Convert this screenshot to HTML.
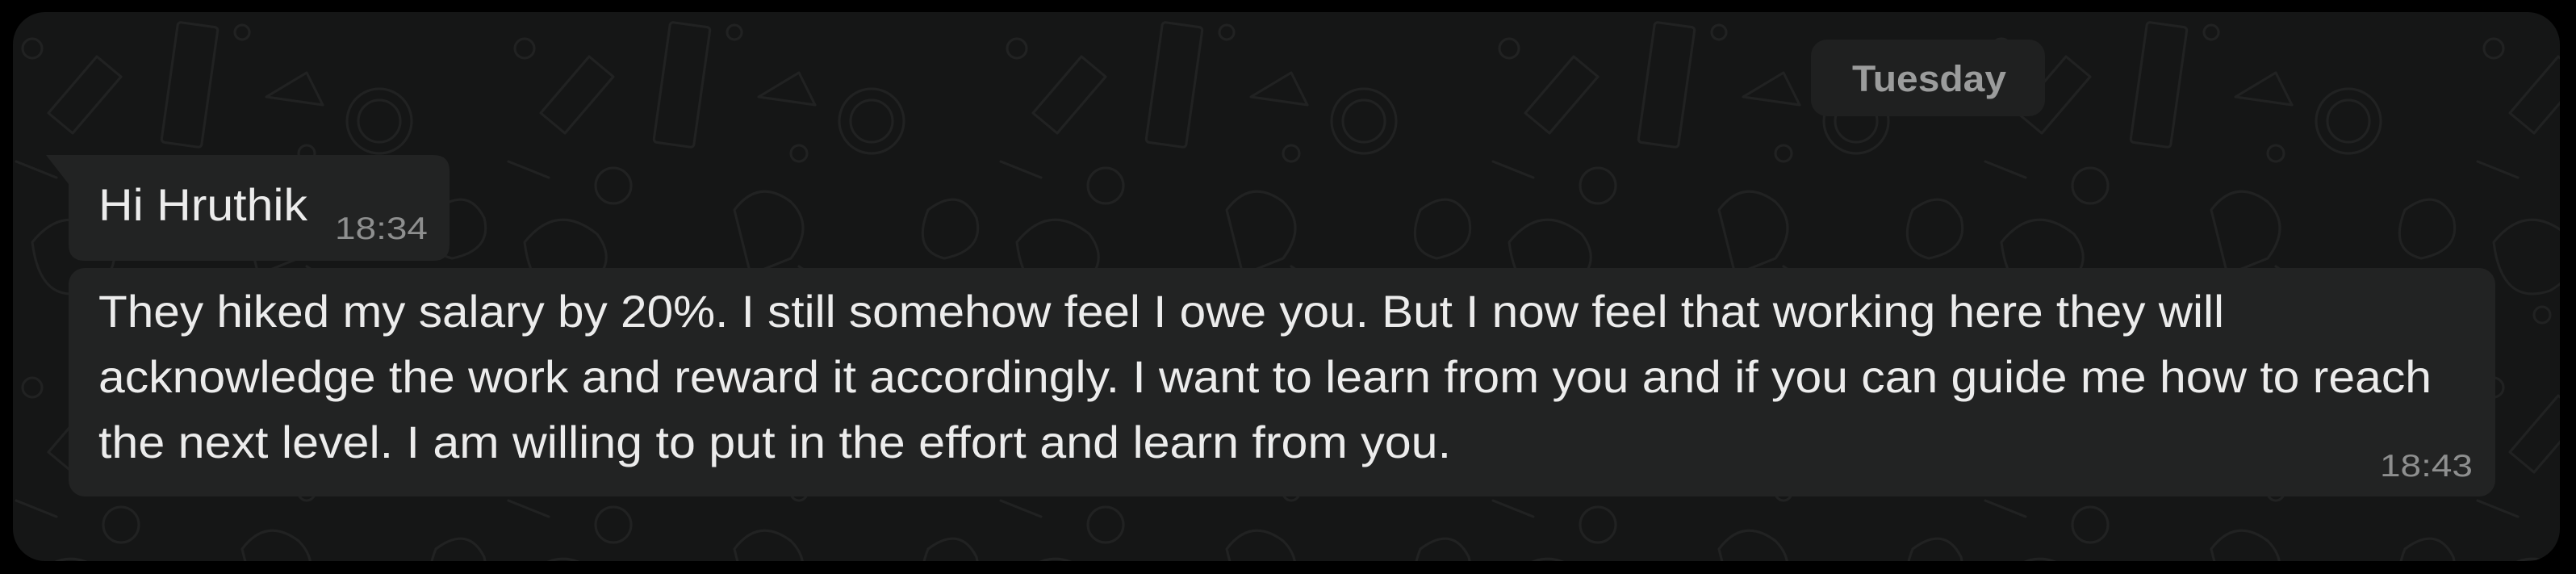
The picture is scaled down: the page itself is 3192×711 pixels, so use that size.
<!DOCTYPE html>
<html><head><meta charset="utf-8"><style>
html,body{margin:0;padding:0;background:#000;width:3192px;height:711px;overflow:hidden}
svg{display:block}
text{font-family:"Liberation Sans",Arial,sans-serif}
</style></head><body>
<svg width="3192" height="711" viewBox="0 0 3192 711" xmlns="http://www.w3.org/2000/svg">
<defs>
<clipPath id="pc"><rect x="16" y="15" width="3156" height="680" rx="40"/></clipPath>
<pattern id="doodle" width="610" height="420" patternUnits="userSpaceOnUse">
<g fill="none" stroke="#212222" stroke-width="3" stroke-linecap="round" stroke-linejoin="round">
<circle cx="40" cy="60" r="12"/><circle cx="150" cy="230" r="22"/><circle cx="300" cy="40" r="9"/>
<circle cx="470" cy="150" r="40"/><circle cx="470" cy="150" r="26"/>
<rect x="210" y="30" width="50" height="150" rx="4" transform="rotate(8 235 105)"/>
<path d="M60 140 l60 -70 l30 25 l-60 70 z M40 300 q40 -50 90 -10 q30 40 -20 70 q-60 20 -70 -60z"/>
<path d="M300 260 q30 -40 70 -10 q30 30 0 70 l-50 20 z M380 330 l30 20 M20 200 l50 20"/>
<path d="M540 260 q40 -30 60 10 q10 40 -40 50 q-40 -10 -20 -60z M330 120 l50 -30 l20 40 z"/>
<circle cx="100" cy="390" r="10"/><circle cx="260" cy="390" r="14"/><circle cx="590" cy="360" r="8"/><circle cx="380" cy="190" r="10"/>
</g></pattern>
</defs>
<g clip-path="url(#pc)">
<rect x="0" y="0" width="3192" height="711" fill="#151616"/>
<rect x="0" y="0" width="3192" height="711" fill="url(#doodle)"/>
</g>
<!-- Tuesday pill -->
<rect x="2244" y="49" width="290" height="95" rx="20" fill="#1f2020"/>
<text x="2295" y="113" font-size="45" font-weight="bold" fill="#9b9c9c" textLength="191" lengthAdjust="spacingAndGlyphs">Tuesday</text>
<!-- bubble 1 -->
<path d="M57 192 L537 192 Q557 192 557 212 L557 303 Q557 323 537 323 L105 323 Q85 323 85 303 L85 228 Z" fill="#222323"/>
<text x="122" y="273" font-size="56" fill="#ececec" textLength="259" lengthAdjust="spacingAndGlyphs">Hi Hruthik</text>
<text x="415" y="296" font-size="39" fill="#8e8f8f" textLength="115" lengthAdjust="spacingAndGlyphs">18:34</text>
<!-- bubble 2 -->
<rect x="85" y="332" width="3007" height="283" rx="20" fill="#222323"/>
<text font-size="56" fill="#ececec">
<tspan x="122" y="405" textLength="2634" lengthAdjust="spacingAndGlyphs">They hiked my salary by 20%. I still somehow feel I owe you. But I now feel that working here they will</tspan>
<tspan x="122" y="486" textLength="2891" lengthAdjust="spacingAndGlyphs">acknowledge the work and reward it accordingly. I want to learn from you and if you can guide me how to reach</tspan>
<tspan x="122" y="567" textLength="1676" lengthAdjust="spacingAndGlyphs">the next level. I am willing to put in the effort and learn from you.</tspan>
</text>
<text x="2949" y="590" font-size="39" fill="#8e8f8f" textLength="115" lengthAdjust="spacingAndGlyphs">18:43</text>
</svg>
</body></html>
